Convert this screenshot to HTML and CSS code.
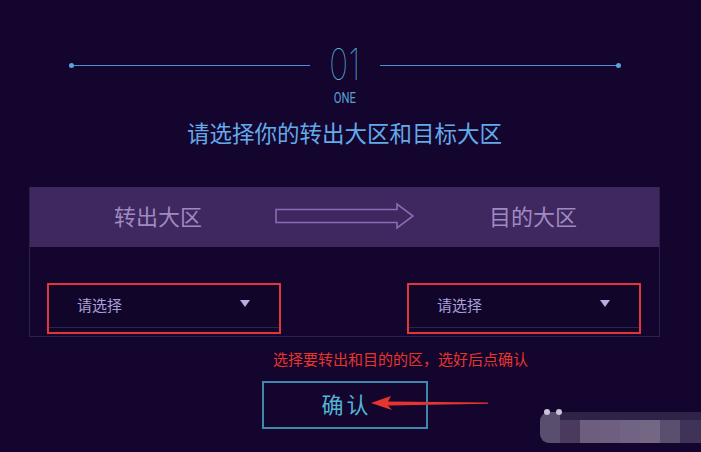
FILE: index.html
```html
<!DOCTYPE html>
<html lang="zh-CN">
<head>
  <meta charset="UTF-8">
  <title>选择大区</title>
  <meta name="viewport" content="width=device-width, initial-scale=1.0">
  <link rel="stylesheet" href="styles.css">
</head>
<body>

  <!-- Étape 01 -->
  <div class="step">
    <span class="step-line left"></span>
    <div class="step-num">
      <span class="digits">01</span>
      <span class="word">ONE</span>
    </div>
    <span class="step-line right"></span>
  </div>

  <h1 class="title">请选择你的转出大区和目标大区</h1>

  <!-- Panneau de choix -->
  <div class="panel">
    <div class="panel-head">
      <span class="head-label from">转出大区</span>
      <svg class="head-arrow" width="140" height="28" viewBox="0 0 140 28">
        <path d="M1 7.5 H122 V2 L138 14 L122 26 V20.5 H1 Z" fill="none" stroke="#8a6cb4" stroke-width="1.6"/>
      </svg>
      <span class="head-label to">目的大区</span>
    </div>
    <div class="panel-body">
      <div class="pick">
        <span>请选择</span>
        <i class="caret"></i>
      </div>
      <div class="pick">
        <span>请选择</span>
        <i class="caret"></i>
      </div>
    </div>
  </div>

  <p class="note">选择要转出和目的的区，选好后点确认</p>

  <div class="actions">
    <button class="confirm">确认</button>
    <svg class="red-arrow" width="120" height="20" viewBox="0 0 120 20">
      <polygon points="0,9 20,2 17,7.5 117,8.5 117,9.8 17,11.5 21,16" fill="#e8342f"/>
    </svg>
  </div>

  <!-- Filigrane flouté -->
  <div class="blur-mark">
    <span class="dot"></span><span class="dot"></span>
  </div>

</body>
</html>
```

FILE: styles.css
```css
body {
  margin: 0;
  width: 701px;
  height: 452px;
  overflow: hidden;
  background-color: #14052e;
  font-family: "Noto Sans CJK SC", "Liberation Sans", sans-serif;
  position: relative;
}

.step {
  display: flex;
  align-items: flex-start;
  width: 552px;
  margin-left: 69px;
  padding-top: 42px;
}

.step-line {
  flex: 1;
  height: 1px;
  margin-top: 23px;
  background-color: #4d8fcf;
  position: relative;
}

.step-line::before {
  content: "";
  position: absolute;
  top: -2px;
  width: 5px;
  height: 5px;
  border-radius: 50%;
  background-color: #5aa2e0;
}

.step-line.left::before { left: 0; }
.step-line.right::before { right: 0; }

.step-num {
  width: 70px;
  display: flex;
  flex-direction: column;
  align-items: center;
}

.digits {
  font-family: Inter, "Liberation Sans", sans-serif;
  font-weight: 100;
  font-size: 44px;
  line-height: 44px;
  color: #5ab4dc;
  transform: scaleX(0.72);
  letter-spacing: 1px;
}

.word {
  font-family: Roboto, "Liberation Sans", sans-serif;
  font-size: 14px;
  line-height: 16px;
  margin-top: 4px;
  color: #5a9fd6;
  transform: scaleX(0.8);
}

.title {
  margin: 10px 0 0;
  text-align: center;
  padding-right: 12px;
  font-size: 22.5px;
  line-height: 32px;
  font-weight: 400;
  color: #62aaea;
}

.panel {
  width: 629px;
  margin: 39px 0 0 29px;
  border: 1px solid #2c2148;
  border-top: none;
}

.panel-head {
  height: 60px;
  background-color: #3f275f;
  display: flex;
  align-items: center;
}

.head-label {
  font-size: 22px;
  color: #9f8ac2;
  margin-bottom: 5px;
}

.head-label.from { margin-left: 84px; }
.head-label.to { margin-left: 74px; }

.head-arrow { margin-left: 73px; margin-top: -2px; }

.panel-body {
  height: 87px;
  display: flex;
  justify-content: space-between;
  align-items: flex-end;
  padding: 0 18px 2px 17px;
}

.pick {
  border: 2px solid #e2353a;
  background-color: #12052a;
  display: flex;
  align-items: center;
  justify-content: space-between;
  padding: 0 29px 0 28px;
  box-sizing: border-box;
  width: 234px;
  height: 51px;
  position: relative;
}

.pick::after {
  content: "";
  position: absolute;
  left: 0;
  right: 0;
  bottom: 4px;
  height: 1px;
  background-color: #2d2546;
}

.pick span {
  font-size: 15px;
  color: #a9a0da;
  margin-top: -8px;
}

.caret {
  width: 0;
  height: 0;
  border-left: 5px solid transparent;
  border-right: 5px solid transparent;
  border-top: 7px solid #b9aee2;
  margin-top: -10px;
}

.note {
  margin: 12px 0 0 273px;
  font-size: 15px;
  line-height: 20px;
  color: #e8352c;
}

.actions {
  display: flex;
  align-items: center;
  margin: 12px 0 0 262px;
  position: relative;
}

.confirm {
  width: 166px;
  height: 48px;
  background: transparent;
  border: 2px solid #3f88ad;
  font-family: inherit;
  font-size: 22px;
  letter-spacing: 3px;
  color: #52b6d2;
  cursor: pointer;
  padding: 0 0 4px 3px;
}

.red-arrow {
  position: absolute;
  left: 109px;
  top: 13px;
}

.blur-mark {
  position: absolute;
  left: 540px;
  top: 412px;
  width: 175px;
  height: 31px;
  border-radius: 9px;
  background: linear-gradient(90deg,
    #5a4e6e 0 20px, #4a3a5e 20px 40px, #6c5e7c 40px 60px,
    #6e5f80 60px 80px, #716383 80px 100px, #746784 100px 120px,
    #5b4f70 120px 140px, #403358 140px 175px);
}

.blur-mark::before {
  content: "";
  position: absolute;
  left: 20px;
  right: 0;
  top: 0;
  height: 8px;
  background-color: #2f2347;
  border-radius: 0 9px 0 0;
}

.dot {
  position: absolute;
  top: -3px;
  width: 6px;
  height: 6px;
  border-radius: 50%;
  background-color: #c9c2d8;
}

.dot:first-child { left: 4px; }
.dot:last-child { left: 16px; }
```
